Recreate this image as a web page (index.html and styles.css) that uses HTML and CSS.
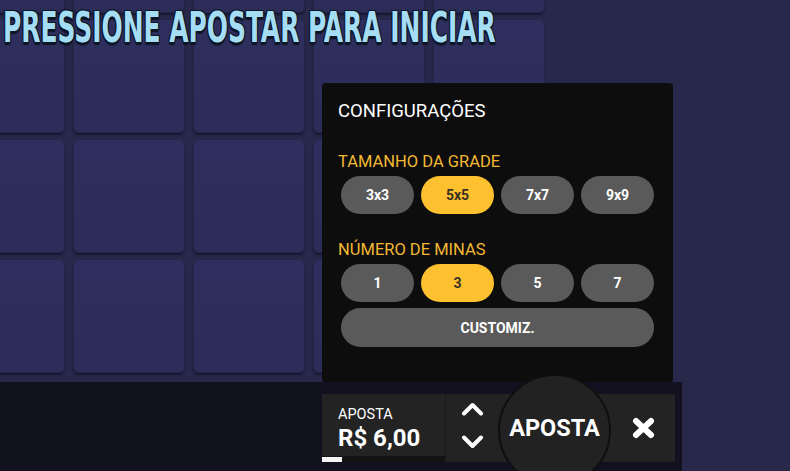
FILE: index.html
```html
<!DOCTYPE html>
<html lang="pt-BR">
<head>
<meta charset="utf-8">
<title>Minas</title>
<link rel="stylesheet" href="styles.css">
</head>
<body>
<div class="game">
  <div class="board">
    <div class="grid-clip">
      <div class="grid">
        <div class="tile"></div><div class="tile"></div><div class="tile"></div><div class="tile"></div><div class="tile"></div>
        <div class="tile"></div><div class="tile"></div><div class="tile"></div><div class="tile"></div><div class="tile"></div>
        <div class="tile"></div><div class="tile"></div><div class="tile"></div><div class="tile"></div><div class="tile"></div>
        <div class="tile"></div><div class="tile"></div><div class="tile"></div><div class="tile"></div><div class="tile"></div>
      </div>
    </div>
    <h1 class="headline"><span>PRESSIONE APOSTAR PARA INICIAR</span></h1>
    <section class="settings">
      <h2 class="settings-title">CONFIGURAÇÕES</h2>
      <h3 class="settings-label">TAMANHO DA GRADE</h3>
      <div class="options">
        <button class="opt">3x3</button>
        <button class="opt is-active">5x5</button>
        <button class="opt">7x7</button>
        <button class="opt">9x9</button>
      </div>
      <h3 class="settings-label second">NÚMERO DE MINAS</h3>
      <div class="options">
        <button class="opt">1</button>
        <button class="opt is-active">3</button>
        <button class="opt">5</button>
        <button class="opt">7</button>
      </div>
      <button class="opt custom">CUSTOMIZ.</button>
    </section>
  </div>
  <div class="bottombar">
    <div class="controls">
      <div class="strip">
        <div class="bet">
          <div class="bet-label">APOSTA</div>
          <div class="bet-value">R$ 6,00</div>
          <div class="progress"><span class="progress-fill"></span></div>
        </div>
        <div class="steps">
          <svg class="chev" width="23" height="14" viewBox="0 0 23 14"><polyline points="3,11.5 11.5,3 20,11.5" fill="none" stroke="#fff" stroke-width="4" stroke-linecap="round" stroke-linejoin="round"/></svg>
          <svg class="chev" width="23" height="14" viewBox="0 0 23 14"><polyline points="3,2.5 11.5,11 20,2.5" fill="none" stroke="#fff" stroke-width="4" stroke-linecap="round" stroke-linejoin="round"/></svg>
        </div>
        <button class="play">APOSTA</button>
        <button class="cancel">
          <svg width="23" height="22" viewBox="0 0 23 22"><path d="M4 4 L19 18 M19 4 L4 18" fill="none" stroke="#fff" stroke-width="6" stroke-linecap="round"/></svg>
        </button>
      </div>
    </div>
  </div>
</div>
</body>
</html>
```
FILE: styles.css
```css
* { box-sizing: border-box; }

html, body {
  margin: 0;
  padding: 0;
}

body {
  width: 790px;
  height: 471px;
  overflow: hidden;
  background: #28284b;
  font-family: Roboto, "Liberation Sans", Arial, sans-serif;
  color: #fff;
}

.game {
  width: 682px;
  height: 471px;
  display: flex;
  flex-direction: column;
}

.board {
  position: relative;
  height: 382px;
  flex-shrink: 0;
}

.grid-clip {
  height: 382px;
  overflow: hidden;
}

.grid {
  display: grid;
  grid-template-columns: repeat(5, 112px);
  grid-auto-rows: 114px;
  column-gap: 8px;
  row-gap: 6px;
  margin-left: -47px;
  margin-top: -101px;
  width: 592px;
}

.tile {
  border-radius: 6px;
  background: linear-gradient(180deg, #2e2f5e 0%, #2b2c58 100%);
  border: 1px solid #252649;
  box-shadow: 0 2px 2px rgba(10, 10, 30, 0.55);
}

.headline {
  position: absolute;
  left: 3px;
  top: 8px;
  margin: 0;
  font-family: "DejaVu Sans", sans-serif;
  font-stretch: condensed;
  font-weight: bold;
  font-size: 42px;
  line-height: 40px;
  white-space: nowrap;
  color: #a5ddf4;
  text-shadow:
    1.5px 0 0 #0c1524, -1.5px 0 0 #0c1524, 0 1.5px 0 #0c1524, 0 -1.5px 0 #0c1524,
    1px 1px 0 #0c1524, -1px -1px 0 #0c1524, 1px -1px 0 #0c1524, -1px 1px 0 #0c1524,
    0 2.5px 1px #0c1524;
}

.headline span {
  display: inline-block;
  transform: scaleX(0.66);
  transform-origin: left center;
}

.settings {
  position: absolute;
  left: 322px;
  top: 83px;
  width: 351px;
  height: 300px;
  z-index: 1;
  background: #0d0d0d;
  border-radius: 4px;
  padding: 18px 19px 0 19px;
}

.settings-title {
  margin: 0 0 31px -3px;
  font-size: 18.5px;
  line-height: 21px;
  font-weight: 400;
  color: #fff;
}

.settings-label {
  margin: 0 0 5px -3px;
  font-size: 16.5px;
  line-height: 18px;
  font-weight: 400;
  color: #f3b832;
}

.settings-label.second {
  margin-top: 27px;
}

.options {
  display: grid;
  grid-template-columns: repeat(4, 1fr);
  column-gap: 7px;
}

.opt {
  height: 38px;
  border: none;
  border-radius: 19px;
  padding: 0;
  background: #5a5a5a;
  color: #fff;
  font-family: Roboto, "Liberation Sans", Arial, sans-serif;
  font-weight: bold;
  font-size: 14px;
}

.opt.is-active {
  background: #fdc130;
  color: #3a3124;
}

.opt.custom {
  display: block;
  width: 100%;
  margin-top: 6px;
  height: 39px;
  border-radius: 20px;
}

.bottombar {
  height: 89px;
  flex-shrink: 0;
  z-index: 2;
  background: #12111e;
  padding-left: 322px;
}

.controls {
  width: 360px;
  height: 89px;
  background: #13111f;
  padding: 12px 7px 0 0;
}

.strip {
  display: flex;
  height: 68px;
  background: #232323;
}

.bet {
  width: 124px;
  flex-shrink: 0;
  display: flex;
  flex-direction: column;
  border-right: 1px solid #1a1a1a;
  padding-top: 13px;
}

.bet-label {
  padding-left: 16px;
  font-size: 14.5px;
  line-height: 15px;
  color: #fff;
}

.bet-value {
  padding-left: 16px;
  margin-top: 3.5px;
  font-size: 24px;
  line-height: 24px;
  font-weight: bold;
  color: #fff;
}

.progress {
  margin-top: auto;
  height: 6px;
  background: #141414;
  display: flex;
}

.progress-fill {
  width: 20px;
  height: 5px;
  margin-top: 1px;
  background: #f4f4f4;
}

.steps {
  width: 52px;
  flex-shrink: 0;
  display: flex;
  flex-direction: column;
  align-items: center;
  justify-content: space-between;
  padding: 8px 0 13px 0;
}

.chev { display: block; }

.play {
  width: 113px;
  height: 113px;
  flex-shrink: 0;
  margin-top: -20px;
  border-radius: 50%;
  border: 2px solid #0f0f0f;
  background: #222222;
  color: #fff;
  font-family: Roboto, "Liberation Sans", Arial, sans-serif;
  font-weight: bold;
  font-size: 23.5px;
  padding: 0 0 5px 0;
}

.cancel {
  flex: 1;
  border: none;
  background: transparent;
  padding: 0;
  display: flex;
  align-items: center;
  justify-content: center;
}

.cancel svg { display: block; }
```
